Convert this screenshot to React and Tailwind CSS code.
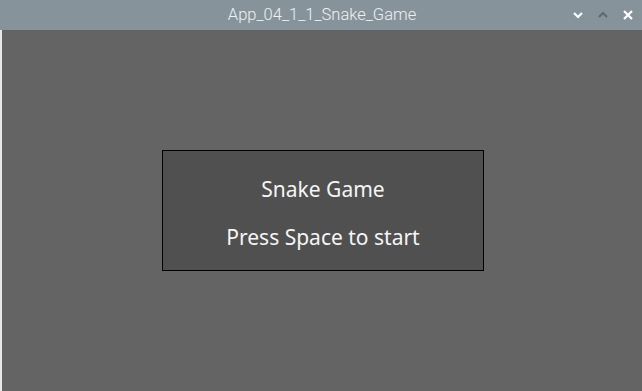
export default function App() {
  return (
    <div className="w-[642px] h-[391px] flex flex-col overflow-hidden bg-[#646464]">
      <div className="h-[30px] shrink-0 bg-[#87939a] relative flex items-center justify-center">
        <span className="text-[16.5px] text-[#eef1f2] pl-[2px]" style={{ fontFamily: "Roboto, sans-serif", fontWeight: 300 }}>
          App_04_1_1_Snake_Game
        </span>
        <div className="absolute right-[8px] top-0 h-[30px] flex items-center gap-[13px]">
          <svg width="12" height="10" viewBox="0 0 12 10">
            <path d="M2 3 L6 7 L10 3" stroke="#ffffff" strokeWidth="2.2" fill="none" />
          </svg>
          <svg width="12" height="10" viewBox="0 0 12 10">
            <path d="M2 7 L6 3 L10 7" stroke="#5f6a70" strokeWidth="2.2" fill="none" />
          </svg>
          <svg width="12" height="10" viewBox="0 0 12 10">
            <path d="M2 1 L10 9 M10 1 L2 9" stroke="#ffffff" strokeWidth="2.2" fill="none" />
          </svg>
        </div>
      </div>
      <div className="flex-1 flex border-l-[2px] border-[#e8e8e8]">
        <div className="flex-1 flex items-start justify-center pt-[120px] pl-[2px]">
          <div className="w-[322px] h-[121px] bg-[#505050] border border-black flex flex-col items-center pt-[24px] gap-[20px]" style={{ fontFamily: "'Noto Sans', sans-serif" }}>
            <div className="text-[21px] leading-[28px] text-[#f5f5f5]">Snake Game</div>
            <div className="text-[21px] leading-[28px] text-[#f5f5f5]">Press Space to start</div>
          </div>
        </div>
      </div>
    </div>
  );
}
